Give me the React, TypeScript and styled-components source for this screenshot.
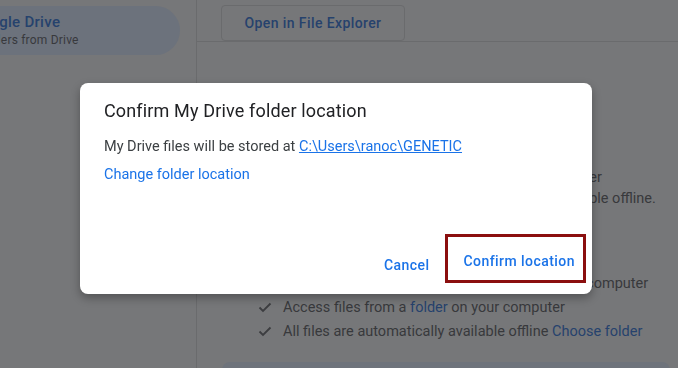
import React from "react";
import styled, { createGlobalStyle } from "styled-components";

/* The reference shows the settings page dimmed behind a modal dialog,
   so the page is painted directly in its dimmed colours. */
const dim = {
  page: "#767779",
  line: "#6a6b6d",
  pill: "#6c727c",
  blue: "#26426d",
  text: "#38393c",
  icon: "#3c3d40",
  card: "#6e737b",
};

const Global = createGlobalStyle`
  html, body { margin: 0; padding: 0; background: #767779; }
  body { font-family: Roboto, "Liberation Sans", sans-serif; overflow: hidden; }
  * { box-sizing: border-box; }
`;

const Page = styled.div`
  display: flex;
  width: 678px;
  height: 368px;
  overflow: hidden;
  background: #767779;
`;

const Sidebar = styled.div`
  flex: 0 0 197px;
  border-right: 1px solid ${dim.line};
  padding-top: 6px;
`;

const NavItem = styled.div<{ $active?: boolean }>`
  margin-left: -31px;
  width: 211px;
  height: 49px;
  border-radius: 0 25px 25px 0;
  background: ${(p) => (p.$active ? dim.pill : "transparent")};
  display: flex;
  flex-direction: column;
  justify-content: center;
  padding-left: 2px;
`;

const NavTitle = styled.div`
  font-size: 15px;
  font-weight: 500;
  letter-spacing: 0.3px;
  color: ${dim.blue};
  line-height: 20px;
`;

const NavSub = styled.div`
  font-size: 12px;
  letter-spacing: 0.2px;
  color: ${dim.text};
  line-height: 17px;
  margin-left: 6px;
`;

const Main = styled.div`
  flex: 1;
  display: flex;
  flex-direction: column;
`;

const TopBar = styled.div`
  height: 64px;
  border-bottom: 1px solid ${dim.line};
  padding: 5px 0 0 24px;
`;

const OutlineButton = styled.button`
  height: 36px;
  width: 184px;
  border: 1px solid ${dim.line};
  border-radius: 4px;
  background: ${dim.page};
  color: ${dim.blue};
  font-family: Roboto, "Liberation Sans", sans-serif;
  font-weight: 500;
  font-size: 14px;
  letter-spacing: 0.4px;
`;

const Content = styled.div`
  padding: 0 0 0 61px;
  display: flex;
  flex-direction: column;
`;

const Option = styled.div<{ $top: number }>`
  margin-top: ${(p) => p.$top}px;
  display: flex;
  flex-direction: column;
`;

const List = styled.ul`
  margin: 0;
  padding: 0;
`;

const Check = styled.li<{ $h: number }>`
  list-style: none;
  height: ${(p) => p.$h}px;
  display: flex;
  align-items: center;
  gap: 11px;
  font-size: 14.5px;
  color: ${dim.text};
  white-space: nowrap;
`;

const Link = styled.span`
  color: ${dim.blue};
`;

const BottomCard = styled.div`
  margin: 19px 8px 0 -36px;
  height: 60px;
  border-radius: 8px;
  background: ${dim.card};
`;

const Layer = styled.div`
  position: fixed;
  top: 0;
  left: 0;
  z-index: 10;
  padding: 83px 0 0 80px;
`;

const Dialog = styled.div`
  width: 512px;
  height: 211px;
  background: #ffffff;
  border-radius: 8px;
  box-shadow: 0 4px 10px rgba(0, 0, 0, 0.3);
  display: flex;
  flex-direction: column;
`;

const DialogBody = styled.div`
  padding: 16px 24px 0 24px;
  flex: 1;
`;

const Title = styled.h2`
  margin: 0 0 10px;
  font-family: Roboto, "Liberation Sans", sans-serif;
  font-weight: 400;
  font-size: 18px;
  letter-spacing: 0.15px;
  line-height: 24px;
  color: #202124;
`;

const Text = styled.p`
  margin: 0;
  font-size: 14.5px;
  line-height: 28px;
  color: #3c4043;
`;

const PathLink = styled.a`
  color: #1a73e8;
  text-decoration: underline;
`;

const BlueLink = styled.a`
  color: #1a73e8;
  text-decoration: none;
`;

const Actions = styled.div`
  display: flex;
  justify-content: flex-end;
  align-items: flex-end;
  gap: 8px;
  padding: 0 6px 11px 0;
`;

const TextButton = styled.button`
  height: 36px;
  padding: 0 8px;
  border: none;
  background: transparent;
  color: #1a73e8;
  font-family: Roboto, "Liberation Sans", sans-serif;
  font-size: 14px;
  font-weight: 500;
  letter-spacing: 0.45px;
  white-space: nowrap;
`;

const Highlight = styled.div`
  border: 3px solid #8b0f0f;
  padding: 6px 0 0 7px;
  height: 49px;
  display: flex;
`;

const CheckIcon = () => (
  <svg width="14" height="14" viewBox="0 0 14 14" aria-hidden>
    <path d="M1.5 7.5 L5 11 L12.5 3.5" fill="none" stroke={dim.icon} strokeWidth="1.8" />
  </svg>
);

export default function App() {
  return (
    <>
      <Global />
      <Page>
        <Sidebar>
          <NavItem $active>
            <NavTitle>Google Drive</NavTitle>
            <NavSub>Folders from Drive</NavSub>
          </NavItem>
        </Sidebar>
        <Main>
          <TopBar>
            <OutlineButton>Open in File Explorer</OutlineButton>
          </TopBar>
          <Content>
            <Option $top={125}>
              <List>
                <Check $h={21}>
                  <CheckIcon />
                  Access files from a virtual drive on your computer
                </Check>
                <Check $h={21}>
                  <CheckIcon />
                  Choose specific files and folders to make available offline.
                </Check>
              </List>
            </Option>
            <Option $top={62}>
              <List>
                <Check $h={24}>
                  <CheckIcon />
                  Store all My Drive files in the cloud and on your computer
                </Check>
                <Check $h={24}>
                  <CheckIcon />
                  <span>
                    Access files from a <Link>folder</Link> on your computer
                  </span>
                </Check>
                <Check $h={24}>
                  <CheckIcon />
                  <span>
                    All files are automatically available offline <Link>Choose folder</Link>
                  </span>
                </Check>
              </List>
            </Option>
            <BottomCard />
          </Content>
        </Main>
      </Page>
      <Layer>
        <Dialog>
          <DialogBody>
            <Title>Confirm My Drive folder location</Title>
            <Text>
              My Drive files will be stored at <PathLink href="#">C:\Users\ranoc\GENETIC</PathLink>
            </Text>
            <Text>
              <BlueLink href="#">Change folder location</BlueLink>
            </Text>
          </DialogBody>
          <Actions>
            <TextButton>Cancel</TextButton>
            <Highlight>
              <TextButton>Confirm location</TextButton>
            </Highlight>
          </Actions>
        </Dialog>
      </Layer>
    </>
  );
}
